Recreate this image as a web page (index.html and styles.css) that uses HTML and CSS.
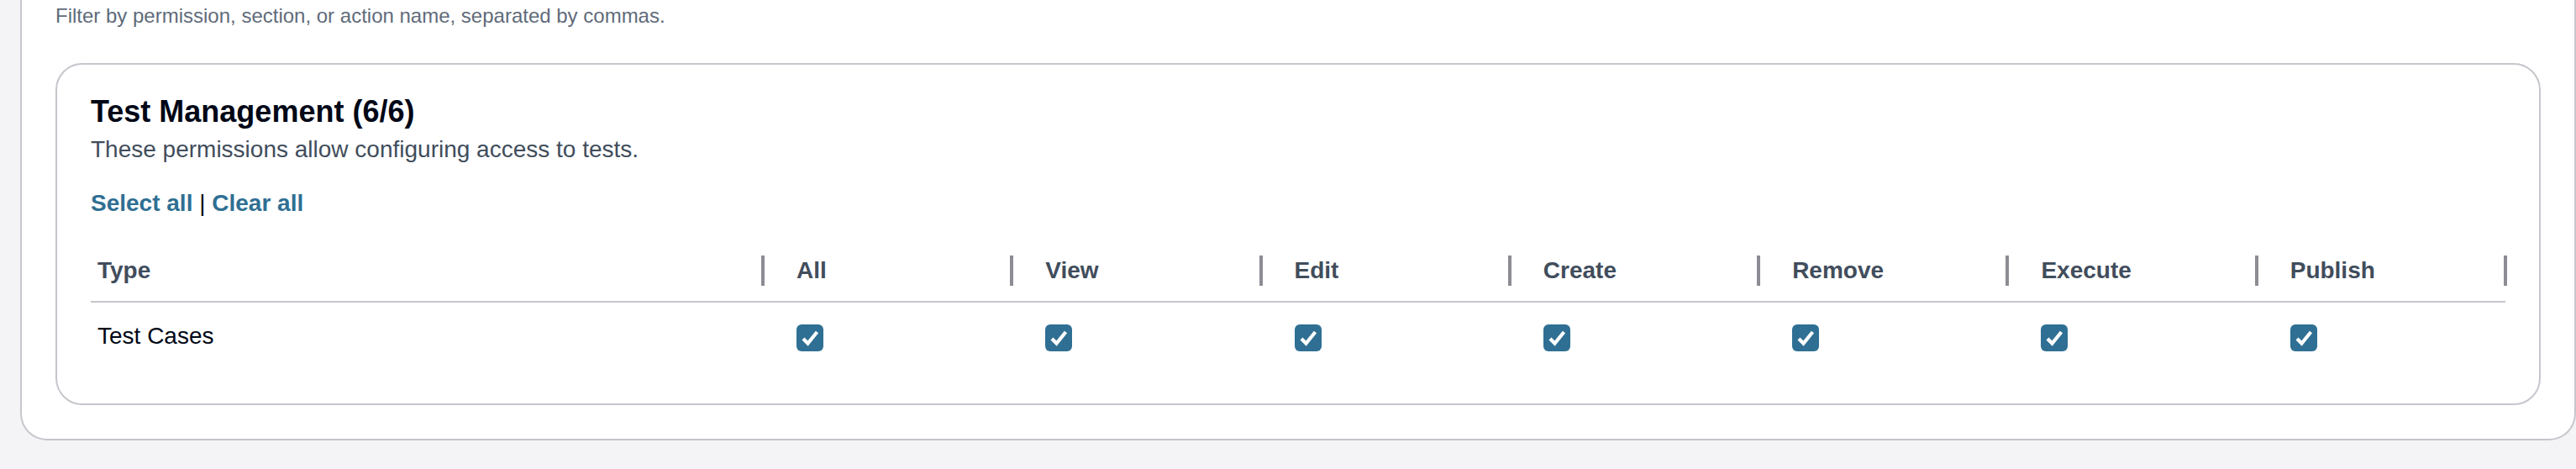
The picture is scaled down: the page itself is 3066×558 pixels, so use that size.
FILE: index.html
```html
<!DOCTYPE html>
<html lang="en">
<head>
<meta charset="utf-8">
<title>Permissions</title>
<link rel="stylesheet" href="styles.css">
</head>
<body>
<section class="outer">
  <p class="constraint">Filter by permission, section, or action name, separated by commas.</p>
  <div class="card">
    <h2 class="title">Test Management (6/6)</h2>
    <p class="desc">These permissions allow configuring access to tests.</p>
    <div class="actions"><a class="link" href="#">Select all</a> | <a class="link" href="#">Clear all</a></div>
    <div class="table" role="table">
      <div class="row head" role="row">
        <div class="cell first" role="columnheader"><span>Type</span><span class="sep"></span></div>
        <div class="cell" role="columnheader"><span>All</span><span class="sep"></span></div>
        <div class="cell" role="columnheader"><span>View</span><span class="sep"></span></div>
        <div class="cell" role="columnheader"><span>Edit</span><span class="sep"></span></div>
        <div class="cell" role="columnheader"><span>Create</span><span class="sep"></span></div>
        <div class="cell" role="columnheader"><span>Remove</span><span class="sep"></span></div>
        <div class="cell" role="columnheader"><span>Execute</span><span class="sep"></span></div>
        <div class="cell" role="columnheader"><span>Publish</span><span class="sep"></span></div>
      </div>
      <div class="row body" role="row">
        <div class="cell first" role="cell">Test Cases</div>
        <div class="cell" role="cell"><span class="cb"><svg viewBox="0 0 32 32" width="32" height="32"><rect width="32" height="32" rx="6" fill="#2f6f93"/><polyline points="8,17 13.5,22.5 24.5,9" fill="none" stroke="#fff" stroke-width="4.2"/></svg></span></div>
        <div class="cell" role="cell"><span class="cb"><svg viewBox="0 0 32 32" width="32" height="32"><rect width="32" height="32" rx="6" fill="#2f6f93"/><polyline points="8,17 13.5,22.5 24.5,9" fill="none" stroke="#fff" stroke-width="4.2"/></svg></span></div>
        <div class="cell" role="cell"><span class="cb"><svg viewBox="0 0 32 32" width="32" height="32"><rect width="32" height="32" rx="6" fill="#2f6f93"/><polyline points="8,17 13.5,22.5 24.5,9" fill="none" stroke="#fff" stroke-width="4.2"/></svg></span></div>
        <div class="cell" role="cell"><span class="cb"><svg viewBox="0 0 32 32" width="32" height="32"><rect width="32" height="32" rx="6" fill="#2f6f93"/><polyline points="8,17 13.5,22.5 24.5,9" fill="none" stroke="#fff" stroke-width="4.2"/></svg></span></div>
        <div class="cell" role="cell"><span class="cb"><svg viewBox="0 0 32 32" width="32" height="32"><rect width="32" height="32" rx="6" fill="#2f6f93"/><polyline points="8,17 13.5,22.5 24.5,9" fill="none" stroke="#fff" stroke-width="4.2"/></svg></span></div>
        <div class="cell" role="cell"><span class="cb"><svg viewBox="0 0 32 32" width="32" height="32"><rect width="32" height="32" rx="6" fill="#2f6f93"/><polyline points="8,17 13.5,22.5 24.5,9" fill="none" stroke="#fff" stroke-width="4.2"/></svg></span></div>
        <div class="cell" role="cell"><span class="cb"><svg viewBox="0 0 32 32" width="32" height="32"><rect width="32" height="32" rx="6" fill="#2f6f93"/><polyline points="8,17 13.5,22.5 24.5,9" fill="none" stroke="#fff" stroke-width="4.2"/></svg></span></div>
      </div>
    </div>
  </div>
</section>
</body>
</html>
```
FILE: styles.css
```css
* { box-sizing: border-box; }

html, body {
  margin: 0;
  padding: 0;
  background: #f4f4f6;
  font-family: "Liberation Sans", Arial, sans-serif;
  color: #000716;
}

.outer {
  margin-left: 24px;
  background: #ffffff;
  border: 2px solid #c6c6cd;
  border-top: none;
  border-radius: 0 0 32px 32px;
  padding: 3px 40px 40px 40px;
}

.constraint {
  margin: 0;
  font-size: 24px;
  line-height: 32px;
  color: #5f6b7a;
}

.card {
  margin-top: 40px;
  border: 2px solid #c6c6cd;
  border-radius: 32px;
  padding: 34px 40px 40px 40px;
  background: #ffffff;
}

.title {
  margin: 0;
  font-size: 36px;
  line-height: 44px;
  font-weight: 700;
  color: #000716;
}

.desc {
  margin: 3px 0 0 0;
  font-size: 28px;
  line-height: 40px;
  color: #414d5c;
}

.actions {
  margin-top: 24px;
  font-size: 28px;
  line-height: 40px;
  color: #000716;
}

.link {
  color: #2f6f93;
  font-weight: 700;
  text-decoration: none;
}

.table {
  margin-top: 32px;
}

.row {
  display: grid;
  grid-template-columns: 800px repeat(7, 1fr);
}

.cell {
  font-size: 28px;
  line-height: 40px;
  padding-left: 40px;
}

.cell.first {
  padding-left: 8px;
}

.head .cell {
  display: flex;
  align-items: center;
  justify-content: space-between;
  padding-top: 8px;
  padding-bottom: 16px;
  border-bottom: 2px solid #c6c6cd;
  font-weight: 700;
  color: #414d5c;
}

.sep {
  display: block;
  width: 4px;
  height: 36px;
  background: #8c8c94;
  margin-right: -2px;
}

.body .cell {
  padding-top: 20px;
  padding-bottom: 20px;
  color: #000716;
}

.cb {
  display: block;
  width: 32px;
  height: 32px;
  margin: 6px 0 2px 0;
}

.cb svg {
  display: block;
}
```
